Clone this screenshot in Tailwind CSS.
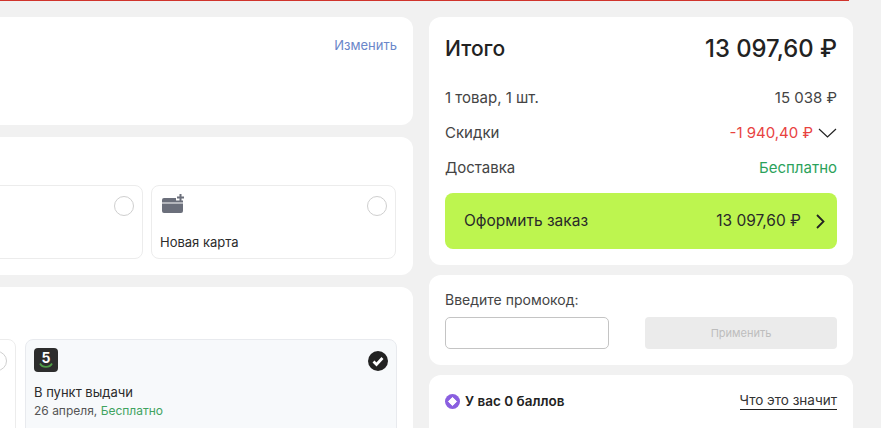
<!DOCTYPE html>
<html lang="ru">
  <head>
    <meta charset="UTF-8" />
    <meta name="viewport" content="width=device-width, initial-scale=1.0" />
    <title>Оформление заказа</title>
    <script src="https://cdn.jsdelivr.net/npm/@tailwindcss/browser@4"></script>
  </head>
  <body class="bg-[#f1f1f1] font-['Inter',sans-serif] text-[#222] h-[428px] overflow-hidden">
    <div class="h-px w-[849px] bg-[#d0342c]"></div>
    <div class="flex gap-4 pt-4 -ml-5 w-[873px] h-[427px] overflow-hidden">
      <!-- left column -->
      <div class="w-[433px] shrink-0 flex flex-col gap-3">
        <section class="h-[108px] bg-white rounded-xl flex justify-end pt-5 pr-4">
          <a class="text-[13px] leading-4 text-[#6a86c9]">Изменить</a>
        </section>

        <section class="h-[138px] bg-white rounded-xl flex items-end justify-end pb-4 pr-[17px] gap-2">
          <div class="flex-1 h-[74px] rounded-lg border border-[#ececec] flex justify-end pt-[10px] pr-2">
            <span class="w-5 h-5 rounded-full border border-[#cfcfcf]"></span>
          </div>
          <div class="w-[245px] h-[74px] rounded-lg border border-[#ececec] pl-2 pr-2 pt-2 flex flex-col relative">
            <svg class="ml-0.5 w-[22px] h-[19px]" viewBox="0 0 22 19">
              <path d="M0 6a2 2 0 0 1 2-2h12v2.500h7v2H0z M0 9.500h21V17a2 2 0 0 1-2 2H2a2 2 0 0 1-2-2z" fill="#6b6f7b" />
              <path d="M18.500 0v7M15 3.500h7" stroke="#6b6f7b" stroke-width="2" />
            </svg>
            <span class="w-5 h-5 rounded-full border border-[#cfcfcf] absolute right-2 top-[10px]"></span>
            <span class="mt-[21px] text-[13px] leading-4 text-[#2b2b2b]">Новая карта</span>
          </div>
        </section>

        <section class="h-[141px] bg-white rounded-t-xl flex items-start justify-end pt-[52px] pr-4 gap-[9px] overflow-hidden">
          <div class="flex-1 h-[100px] rounded-lg border border-[#ececec] flex justify-end pt-[11px] pr-2">
            <span class="w-5 h-5 rounded-full border border-[#cfcfcf]"></span>
          </div>
          <div class="w-[372px] shrink-0 h-[100px] rounded-lg border border-[#e8eaee] bg-[#f7f9fb] pl-2 pr-2 pt-2 relative">
            <div class="w-6 h-6 rounded-[4px] bg-[#2d2d2d]">
              <svg class="w-6 h-6" viewBox="0 0 24 24">
                <text x="12" y="14.500" text-anchor="middle" font-family="Inter, sans-serif" font-size="14" font-weight="700" fill="#fff">5</text>
                <path d="M6 15.500c2.500 4.500 9.500 4.500 12 0" fill="none" stroke="#4f9d46" stroke-width="1.800" />
              </svg>
            </div>
            <svg class="w-5 h-5 absolute right-2 top-[11px]" viewBox="0 0 20 20">
              <circle cx="10" cy="10" r="10" fill="#222" />
              <path d="M5.500 10.500l3 3 6-6.500" fill="none" stroke="#fff" stroke-width="2.800" />
            </svg>
            <div class="mt-3 text-[13px] leading-4 text-[#2b2b2b]">В пункт выдачи</div>
            <div class="mt-[3px] text-xs leading-4 text-[#555]">26 апреля, <span class="text-[#3fa35f]">Бесплатно</span></div>
          </div>
        </section>
      </div>

      <!-- right column -->
      <div class="w-[424px] shrink-0 flex flex-col gap-2.5">
        <section class="h-[248px] bg-white rounded-xl px-4 pt-[17px]">
          <div class="flex justify-between items-center h-[30px]">
            <span class="text-[21px] font-medium">Итого</span>
            <span class="text-[23.800px] font-medium">13 097,60 ₽</span>
          </div>
          <div class="mt-6 flex justify-between text-[15px] leading-5 text-[#444]">
            <span>1 товар, 1 шт.</span><span>15 038 ₽</span>
          </div>
          <div class="mt-[15px] flex justify-between text-[15px] leading-5 text-[#444]">
            <span>Скидки</span>
            <span class="flex items-center gap-[5px] text-[#e8423f]">-1 940,40 ₽
              <svg class="w-[19px] h-[10px]" viewBox="0 0 19 10"><path d="M1 1l8.500 8L18 1" fill="none" stroke="#222" stroke-width="1.200" /></svg>
            </span>
          </div>
          <div class="mt-[15px] flex justify-between text-[15px] leading-5 text-[#444]">
            <span>Доставка</span><span class="text-[#2ba25b]">Бесплатно</span>
          </div>
          <button class="mt-[15px] w-full h-14 rounded-lg bg-[#bdf54f] flex items-center pl-[19px] pr-3 text-[15.500px] text-[#2a2a2a]">
            <span>Оформить заказ</span>
            <span class="ml-auto">13 097,60 ₽</span>
            <svg class="ml-[15px] w-[9px] h-[15px]" viewBox="0 0 9 15"><path d="M1 1l6.500 6.500L1 14" fill="none" stroke="#222" stroke-width="1.800" /></svg>
          </button>
        </section>

        <section class="h-[90px] bg-white rounded-xl px-4 pt-[17px]">
          <div class="text-[14px] leading-4 text-[#444]">Введите промокод:</div>
          <div class="mt-[9px] flex justify-between">
            <input class="w-[164px] h-8 rounded-[5px] border border-[#c4c4c4] bg-white" />
            <button class="w-[192px] h-8 rounded-[4px] bg-[#ebebeb] text-[11px] text-[#bdbdbd]">Применить</button>
          </div>
        </section>

        <section class="h-[53px] bg-white rounded-t-xl px-4 pt-[17px] flex justify-between items-start">
          <div class="flex items-center gap-[5px] h-[18px] text-[13.500px] font-semibold">
            <svg class="w-[15px] h-[15px]" viewBox="0 0 15 15">
              <circle cx="7.500" cy="7.500" r="7.500" fill="#8a5fe0" />
              <path d="M7.500 3.400L11.600 7.500 7.500 11.600 3.400 7.500z" fill="#fff" stroke="#fff" stroke-linejoin="round" />
            </svg>
            <span>У вас 0 баллов</span>
          </div>
          <a class="text-[13.500px] leading-[17px] text-[#333] border-b border-[#222]">Что это значит</a>
        </section>
      </div>
    </div>
  </body>
</html>
